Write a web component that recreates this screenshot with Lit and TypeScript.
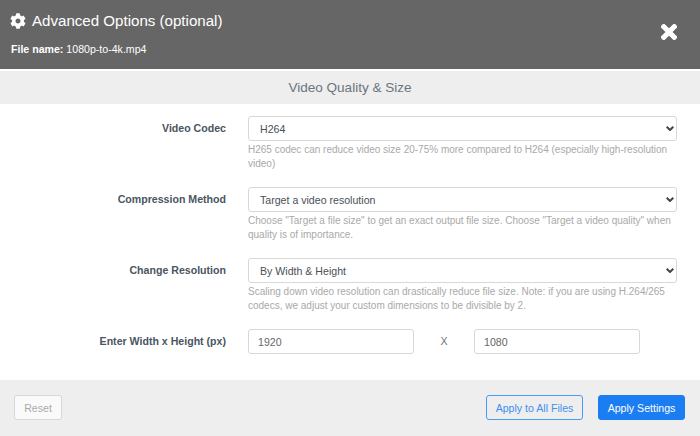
import { LitElement, html, css } from "lit";
import { customElement } from "lit/decorators.js";

@customElement("app-root")
export class AppRoot extends LitElement {
  static styles = css`
    :host { display: block; width: 700px; height: 436px; overflow: hidden; background: #fff; font-family: "Liberation Sans", Arial, sans-serif; color: #495057; }
    * { box-sizing: border-box; }
    .header { height: 69px; background: #666; color: #fff; display: flex; justify-content: space-between; padding: 10px 23px 0 10px; }
    .title { display: flex; align-items: center; gap: 6px; font-size: 15.1px; line-height: 22px; }
    .title svg { width: 16px; height: 16px; fill: #fff; }
    .file { font-size: 10.6px; line-height: 14px; margin: 10px 0 0 1px; }
    .file b { font-weight: 700; }
    .close { width: 16px; height: 16px; margin-top: 14px; fill: #fff; stroke: #fff; stroke-width: 24; }
    .section { margin-top: 1px; height: 34px; background: #eee; border-top: 1px solid #fff; text-align: center; font-size: 13.55px; line-height: 33px; color: #6c757d; }
    .form { height: 276px; padding-top: 12px; }
    .row { display: grid; grid-template-columns: 226px 429px; column-gap: 22px; height: 71px; }
    .row:last-child { height: 52px; }
    label { text-align: right; font-size: 10.6px; font-weight: 700; line-height: 25px; color: #4a5562; }
    select, input { display: block; font-family: inherit; font-size: 10.6px; color: #495057; background: #fff; border: 1px solid #d8d8d8; border-radius: 3px; height: 25px; outline: none; }
    .pick { position: relative; }
    select { width: 429px; padding: 0 11px; appearance: none; }
    .chev { position: absolute; right: 3px; top: 10px; width: 8px; height: 5px; fill: none; stroke: #444; stroke-width: 2; pointer-events: none; }
    input { width: 166px; padding: 0 9px; color: #666; }
    .hint { font-size: 10px; line-height: 14px; margin-top: 2px; color: #a9a9a9; }
    .dims { display: flex; align-items: flex-start; width: 392px; justify-content: space-between; }
    .x { font-size: 10.6px; line-height: 25px; color: #6c757d; }
    .footer { height: 56px; background: #eee; display: flex; align-items: flex-start; padding: 15px 15px 0 14px; gap: 15px; }
    button { font-family: inherit; font-size: 10.6px; height: 25px; border-radius: 3px; padding: 0; }
    .reset { width: 48px; background: #fafafa; border: 1px solid #d8d8d8; color: #aaa; margin-right: auto; }
    .all { width: 97px; background: transparent; border: 1px solid #4a9bf5; color: #3f8ff0; }
    .apply { width: 87px; background: #1a7ef2; border: 1px solid #1a7ef2; color: #fff; }
  `;

  private pick(text: string) {
    return html`<div class="pick">
      <select><option>${text}</option></select>
      <svg class="chev" viewBox="0 0 8 5"><path d="M0.7 0.8 L4 4 L7.3 0.8" /></svg>
    </div>`;
  }

  render() {
    return html`
      <div class="header">
        <div>
          <div class="title">
            <svg viewBox="0 0 512 512"><path d="M487.4 315.7l-42.6-24.6c4.3-23.2 4.3-47 0-70.2l42.6-24.6c4.9-2.8 7.1-8.6 5.5-14-11.1-35.6-30-67.8-54.7-94.6-3.8-4.1-10-5.1-14.8-2.3L380.8 110c-17.9-15.4-38.5-27.3-60.8-35.1V25.8c0-5.6-3.9-10.5-9.4-11.7-36.7-8.2-74.3-7.8-109.2 0-5.5 1.2-9.4 6.1-9.4 11.7V75c-22.2 7.9-42.8 19.8-60.8 35.1L88.7 85.5c-4.9-2.8-11-1.9-14.8 2.3-24.7 26.7-43.6 58.9-54.7 94.6-1.7 5.4.6 11.2 5.5 14L67.3 221c-4.3 23.2-4.3 47 0 70.2l-42.6 24.6c-4.9 2.8-7.1 8.6-5.5 14 11.1 35.6 30 67.8 54.7 94.6 3.8 4.1 10 5.1 14.8 2.3l42.6-24.6c17.9 15.4 38.5 27.3 60.8 35.1v49.2c0 5.6 3.9 10.5 9.4 11.7 36.7 8.2 74.3 7.8 109.2 0 5.5-1.2 9.4-6.1 9.4-11.7v-49.2c22.2-7.9 42.8-19.8 60.8-35.1l42.6 24.6c4.9 2.8 11 1.9 14.8-2.3 24.7-26.7 43.6-58.9 54.7-94.6 1.5-5.5-.7-11.3-5.6-14.1zM256 336c-44.1 0-80-35.9-80-80s35.9-80 80-80 80 35.9 80 80-35.9 80-80 80z"/></svg>
            <span>Advanced Options (optional)</span>
          </div>
          <div class="file"><b>File name:</b> 1080p-to-4k.mp4</div>
        </div>
        <svg class="close" viewBox="-10 70 372 372" preserveAspectRatio="none"><path d="M242.72 256l100.07-100.07c12.28-12.28 12.28-32.19 0-44.48l-22.24-22.24c-12.28-12.28-32.19-12.28-44.48 0L176 189.28 75.93 89.21c-12.28-12.28-32.19-12.28-44.48 0L9.21 111.45c-12.28 12.28-12.28 32.19 0 44.48L109.28 256 9.21 356.07c-12.28 12.28-12.28 32.19 0 44.48l22.24 22.24c12.28 12.28 32.2 12.28 44.48 0L176 322.72l100.07 100.07c12.28 12.28 32.2 12.28 44.48 0l22.24-22.24c12.28-12.28 12.28-32.19 0-44.48L242.72 256z"/></svg>
      </div>
      <div class="section">Video Quality &amp; Size</div>
      <div class="form">
        <div class="row">
          <label>Video Codec</label>
          <div>
            ${this.pick("H264")}
            <div class="hint">H265 codec can reduce video size 20-75% more compared to H264 (especially high-resolution video)</div>
          </div>
        </div>
        <div class="row">
          <label>Compression Method</label>
          <div>
            ${this.pick("Target a video resolution")}
            <div class="hint">Choose "Target a file size" to get an exact output file size. Choose "Target a video quality" when quality is of importance.</div>
          </div>
        </div>
        <div class="row">
          <label>Change Resolution</label>
          <div>
            ${this.pick("By Width & Height")}
            <div class="hint">Scaling down video resolution can drastically reduce file size. Note: if you are using H.264/265 codecs, we adjust your custom dimensions to be divisible by 2.</div>
          </div>
        </div>
        <div class="row">
          <label>Enter Width x Height (px)</label>
          <div class="dims">
            <input value="1920" />
            <span class="x">X</span>
            <input value="1080" />
          </div>
        </div>
      </div>
      <div class="footer">
        <button class="reset">Reset</button>
        <button class="all">Apply to All Files</button>
        <button class="apply">Apply Settings</button>
      </div>
    `;
  }
}
